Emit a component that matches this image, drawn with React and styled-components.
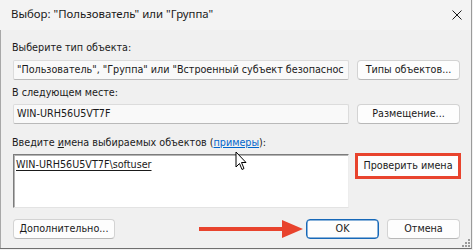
import React from 'react'
import styled, { createGlobalStyle } from 'styled-components'

const Global = createGlobalStyle`
  html, body { margin: 0; padding: 0; background: #f0f0f0; }
  body { font-family: "DejaVu Sans Condensed", "Liberation Sans", sans-serif; font-size: 10.7px; color: #1a1a1a; }
`

const Win = styled.div`
  position: relative;
  width: 472px;
  height: 249px;
  box-sizing: border-box;
  background: #f0f0f0;
  border-bottom: 1px solid #6f6f6f;
  border-right: 1px solid #9a9a9a;
  display: flex;
  flex-direction: column;
`

const TitleBar = styled.div`
  height: 30px;
  display: flex;
  align-items: center;
  justify-content: space-between;
  padding: 0 9px 0 11px;
  background: #f3f3f3;
`

const Title = styled.span`
  font-family: "Noto Sans", "Liberation Sans", sans-serif;
  font-size: 11.4px;
  line-height: 16px;
  margin-top: -2px;
`

const Body = styled.div`
  flex: 1;
  border-left: 1px solid #a8a8a8;
  padding: 0 11px 0 11px;
  display: flex;
  flex-direction: column;
`

const Label = styled.div`
  line-height: 16px;
  margin-top: ${p => p.$mt}px;
  white-space: nowrap;
`

const Row = styled.div`
  display: grid;
  grid-template-columns: 336px 103px;
  column-gap: 8px;
  margin-top: ${p => p.$mt}px;
  padding-left: 1px;
  align-items: start;
`

const Field = styled.div`
  height: 20px;
  box-sizing: border-box;
  background: #f9f9f9;
  border: 1px solid #dcdcdc;
  border-bottom-color: #b9b9b9;
  border-radius: 2px;
  padding: 0 3px;
  line-height: 18px;
  white-space: nowrap;
  overflow: hidden;
`

const Names = styled.div`
  height: 54px;
  box-sizing: border-box;
  background: #fff;
  border: 1px solid;
  border-color: #7c7c7c #ededed #e3e3e3 #7c7c7c;
  box-shadow: inset 1px 1px 0 #b4b4b4;
  padding: 2px 2px;
  line-height: 16px;
`

const Resolved = styled.span`
  text-decoration: underline;
  text-underline-offset: 2px;
`

const Button = styled.button`
  font: inherit;
  color: #1a1a1a;
  height: ${p => p.$h || 20}px;
  width: ${p => (p.$w ? p.$w + 'px' : '100%')};
  box-sizing: border-box;
  padding: 0;
  background: #fdfdfd;
  border: 1px solid #d3d3d3;
  border-bottom-color: #b8b8b8;
  border-radius: 4px;
  line-height: 16px;
  white-space: nowrap;
`

const CheckButton = styled(Button)`
  border: 3px solid #e8432d;
  border-radius: 0;
  width: 106px;
  height: 26px;
  margin: -1px 0 0 -2px;
`

const OkButton = styled(Button)`
  border-color: #1668b8;
  box-shadow: inset 0 0 0 0.5px #1668b8;
`

const Under = styled.span`text-decoration: underline;`

const Link = styled.span`
  color: #0066cc;
  text-decoration: underline;
`

const Footer = styled.div`
  display: flex;
  align-items: center;
  margin-top: 11px;
  padding-left: 1px;
`

const Spacer = styled.div`flex: 1;`

const Gap = styled.div`width: 8px;`

const Overlay = styled.svg`
  position: absolute;
  left: ${p => p.$x}px;
  top: ${p => p.$y}px;
  pointer-events: none;
`

const CloseIcon = () => (
  <svg width='10' height='10' viewBox='0 0 10 10'>
    <path d='M0.5 0.5 L9.5 9.5 M9.5 0.5 L0.5 9.5' stroke='#1a1a1a' strokeWidth='1' />
  </svg>
)

export default function App () {
  return (
    <Win>
      <Global />
      <TitleBar>
        <Title>Выбор: "Пользователь" или "Группа"</Title>
        <CloseIcon />
      </TitleBar>
      <Body>
        <Label $mt={10}>Выберите тип объекта:</Label>
        <Row $mt={4}>
          <Field>"Пользователь", "Группа" или "Встроенный субъект безопаснос</Field>
          <Button>Типы объектов...</Button>
        </Row>
        <Label $mt={5}>В следующем месте:</Label>
        <Row $mt={3}>
          <Field>WIN-URH56U5VT7F</Field>
          <Button>Размещение...</Button>
        </Row>
        <Label $mt={11}>Введите <Under>и</Under>мена выбираемых объектов (<Link>примеры</Link>):</Label>
        <Row $mt={3}>
          <Names><Resolved>WIN-URH56U5VT7F\softuser</Resolved></Names>
          <CheckButton>Проверить имена</CheckButton>
        </Row>
        <Footer>
          <Button $w={102}>Дополнительно...</Button>
          <Spacer />
          <OkButton $w={73}>OK</OkButton>
          <Gap />
          <Button $w={73}>Отмена</Button>
        </Footer>
      </Body>

      {/* annotation arrow */}
      <Overlay $x={198} $y={219} width='106' height='20' viewBox='0 0 106 20'>
        <path d='M1 10 H86' stroke='#e8432d' strokeWidth='4' />
        <path d='M84 1 L105 10 L84 19 Z' fill='#e8432d' />
      </Overlay>

      {/* mouse pointer */}
      <Overlay $x={235} $y={151} width='13' height='21' viewBox='0 0 13 21'>
        <path d='M1 1 L1 16 L4.5 12.5 L7 18.5 L9 17.5 L6.5 11.5 L11 11.5 Z' fill='#fff' stroke='#000' strokeWidth='1' strokeLinejoin='miter' />
      </Overlay>

      {/* resize grip */}
      <Overlay $x={461} $y={238} width='9' height='9' viewBox='0 0 9 9'>
        <g fill='#9a9a9a'>
          <rect x='7' y='1' width='2' height='2' />
          <rect x='4' y='4' width='2' height='2' />
          <rect x='7' y='4' width='2' height='2' />
          <rect x='1' y='7' width='2' height='2' />
          <rect x='4' y='7' width='2' height='2' />
          <rect x='7' y='7' width='2' height='2' />
        </g>
      </Overlay>
    </Win>
  )
}
